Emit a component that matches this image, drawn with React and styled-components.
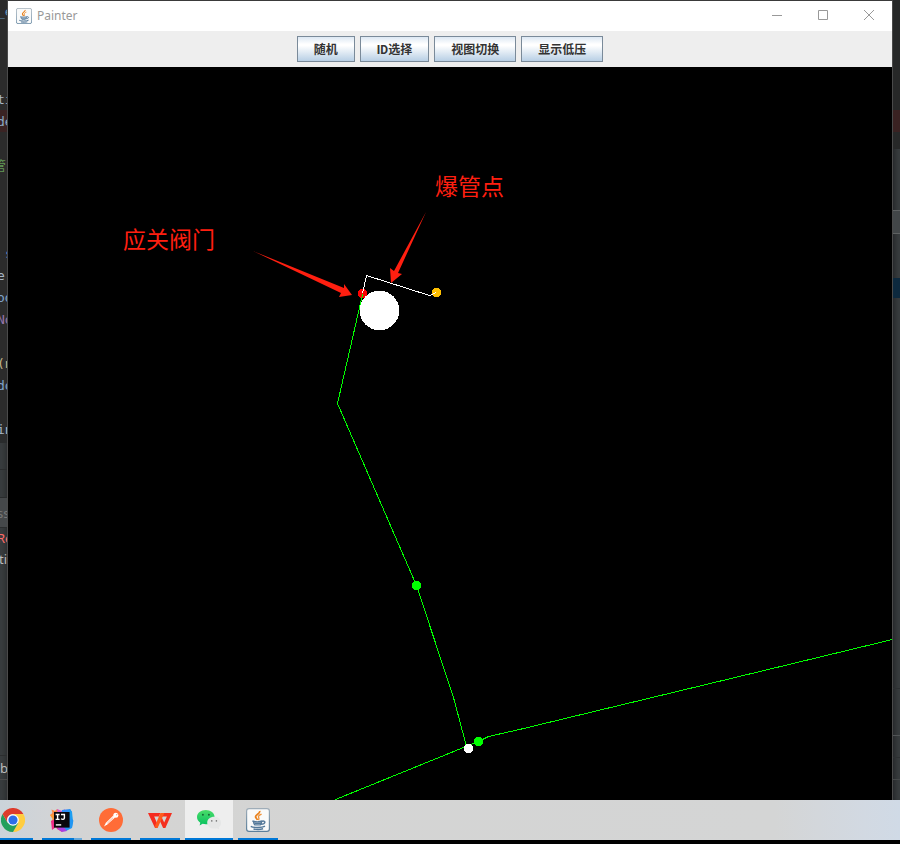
import React from 'react';
import styled, { createGlobalStyle, css } from 'styled-components';

const GlobalStyle = createGlobalStyle`
  * { box-sizing: border-box; }
  body {
    margin: 0;
    background: #000;
    font-family: "Noto Sans", "Noto Sans CJK SC", sans-serif;
  }
`;

const Screen = styled.div`
  display: flex;
  flex-direction: column;
  min-height: 100vh;
  padding-bottom: 4px;
  overflow: hidden;
  background: #000;
`;

const Desktop = styled.main`
  flex: 1;
  display: grid;
  grid-template-columns: 7px minmax(0, 1fr) 7px;
`;

/* Editor behind the window */
const EditorEdge = styled.div`
  display: flex;
  flex-direction: column;
  overflow: hidden;
  background: #393d3f;
  ${({ $side }) =>
    $side === 'left'
      ? 'box-shadow: inset -6px 0 6px -5px #26282a;'
      : 'box-shadow: inset 6px 0 6px -5px #1c1e20;'}
`;

const CodeLine = styled.div`
  flex: none;
  height: 22px;
  line-height: 24px;
  font-family: "DejaVu Sans Mono", "Noto Sans CJK SC", monospace;
  font-size: 13px;
  white-space: pre;
  text-indent: ${({ $indent = -3 }) => `${$indent}px`};
  color: ${({ $color }) => $color || '#a9b7c6'};
  background: ${({ $bg }) => $bg || '#2b2b2b'};
`;

const Band = styled.div`
  flex: ${({ $h }) => ($h ? 'none' : '1')};
  height: ${({ $h }) => ($h ? `${$h}px` : 'auto')};
  line-height: ${({ $h }) => ($h ? `${$h}px` : 'normal')};
  font-family: "Noto Sans", sans-serif;
  font-size: 13px;
  white-space: pre;
  text-indent: ${({ $indent = 0 }) => `${$indent}px`};
  color: ${({ $color }) => $color || '#bbbbbb'};
  background: ${({ $bg }) => $bg || 'transparent'};
  ${({ $line }) => $line && css`border-bottom: 1px solid ${$line};`}
`;

/* Painter window */
const Window = styled.section`
  display: flex;
  flex-direction: column;
  border: 1px solid #4a4a4a;
  border-top-color: #3a3a3a;
  border-bottom: 0;
  background: #000;
`;

const TitleBar = styled.header`
  display: flex;
  align-items: center;
  height: 30px;
  padding-left: 8px;
  gap: 5px;
  background: #fff;
`;

const Title = styled.h1`
  flex: 1;
  margin: 0;
  font-size: 12px;
  font-weight: 400;
  line-height: 16px;
  color: #999;
`;

const Controls = styled.div`
  display: flex;
`;

const ControlButton = styled.button`
  display: grid;
  place-items: center;
  width: 46px;
  height: 30px;
  padding: 0 0 2px;
  border: 0;
  background: transparent;
  color: #999;
`;

const Toolbar = styled.div`
  display: flex;
  justify-content: center;
  gap: 5px;
  padding: 5px;
  background: #eee;
`;

const ToolButton = styled.button`
  height: 26px;
  padding: 2px 16px 0;
  border: 1px solid #7a8a99;
  border-radius: 0;
  background: linear-gradient(#dde8f3 0%, #fff 30%, #fff 36%, #b8cfe5 100%);
  font-family: Roboto, "Noto Sans CJK SC", sans-serif;
  font-size: 12px;
  font-weight: 700;
  line-height: 22px;
  color: #333;
  white-space: nowrap;
`;

const Canvas = styled.div`
  flex: 1;
  display: flex;
  background: #000;
`;

const Drawing = styled.svg`
  display: block;
  width: 100%;
  height: auto;
`;

const Pipe = styled.polyline`
  fill: none;
  stroke: ${({ $color }) => $color};
  stroke-width: 1px;
  shape-rendering: crispEdges;
`;

const Node = styled.circle`
  fill: ${({ $color }) => $color};
  shape-rendering: crispEdges;
`;

const Arrow = styled.polygon`
  fill: #ff1f10;
`;

const Note = styled.text`
  fill: #ff1f10;
  font-family: "Noto Sans CJK SC", sans-serif;
  font-size: 23px;
  font-weight: 400;
`;

/* Taskbar */
const Taskbar = styled.nav`
  display: flex;
  gap: 1px;
  height: 40px;
  overflow: hidden;
  background: linear-gradient(90deg, #cbd3da 0, #d2d4d6 50px, #d4d4d3 110px, #d4d5d5 86%, #d2d9e2 96%, #d0dae6 100%);
`;

const Task = styled.button`
  flex: none;
  display: grid;
  grid-template-rows: 38px 2px;
  justify-items: center;
  align-items: center;
  width: 48px;
  height: 40px;
  padding: 0;
  border: 0;
  background: ${({ $active }) => ($active ? '#eeeeee' : 'transparent')};

  &:first-child {
    margin-left: -11px;
  }

  svg { margin-top: 2px; }
`;

const Indicator = styled.span`
  width: ${({ $active }) => ($active ? '48px' : '40px')};
  height: 2px;
  background: ${({ $stacked }) =>
    $stacked ? 'linear-gradient(90deg, #0078d7 32px, #66a9dc 32px)' : '#0078d7'};
`;

const JavaIcon = ({ size, id }) => (
  <svg width={size} height={size} viewBox="0 0 24 24" aria-hidden="true">
    <defs>
      <linearGradient id={id} x1="0" y1="0" x2="0" y2="1">
        <stop offset="0" stopColor="#9fadb8" />
        <stop offset="1" stopColor="#5b7f9b" />
      </linearGradient>
    </defs>
    <rect x="0.6" y="0.6" width="22.8" height="22.8" rx="2.4" fill="#f9fafa" stroke={`url(#${id})`} strokeWidth="1.2" />
    <path d="M13.7 3c.8 2.7-5.2 3.8-4 6.4.4.9 1.4 1.5 1.8 2.6" fill="none" stroke="#e9821e" strokeWidth="1.8" />
    <path d="M15.6 6.2c-2.5 1-3.8 2-2.9 3.4.6.9.4 1.6-.4 2.4" fill="none" stroke="#f0953c" strokeWidth="1.4" />
    <path d="M6.4 13c2.6.9 7.4.9 9.9 0M7.5 13.5c.2 1.6.6 2.6 1.3 3.4h5.4c.8-.8 1.3-1.8 1.4-3.4M16.2 13.2c3.8-.9 3.5 2.9-.9 3" fill="none" stroke="#54799a" strokeWidth="1.4" />
    <path d="M8.5 15.3h6.6M4.8 18.4c1.8 1.5 11.4 1.5 14.2-.2M7.5 21c3 .6 7 .5 9.6-.2" fill="none" stroke="#54799a" strokeWidth="1.4" />
  </svg>
);

const ChromeIcon = () => (
  <svg width="24" height="24" viewBox="0 0 24 24" aria-hidden="true">
    <path d="M12 6h10.4A12 12 0 0 1 12 24l5.2-9z" fill="#ffcd40" />
    <path d="M6.8 15 1.6 6A12 12 0 0 0 12 24l5.2-9z" fill="#249f5c" />
    <path d="M1.6 6A12 12 0 0 1 22.4 6H12a6 6 0 0 0-5.2 9z" fill="#dd3b2c" />
    <circle cx="12" cy="12" r="5.8" fill="#fff" />
    <circle cx="12" cy="12" r="4.6" fill="#2d6ee8" />
  </svg>
);

const IdeaIcon = () => (
  <svg width="24" height="24" viewBox="0 0 24 24" aria-hidden="true">
    <path d="M1.5 1.5 5 3l2-2 3 2 2 5-6 3-6-4 2.4-2z" fill="#fb8a4a" />
    <path d="M7 1l5 2 3-2-2 9-5-3z" fill="#d95bd0" />
    <path d="M12 2l8-1 2 3-3 8-8-5z" fill="#2f8cf5" />
    <path d="M20 1l2 3 1 9-1 6-5 1V5z" fill="#1c9ff2" />
    <path d="M20 9l3.4 3.5L22 20l-6 3-5-7z" fill="#2196f3" />
    <path d="M0 7l6-1v10l-5-2 1.5-3z" fill="#fb9a39" />
    <path d="M1 13l4-2 9 8-2 5-5-3-1-2-4 3z" fill="#ef2b86" />
    <path d="M7 20l6-2 4 5-5 1z" fill="#a93fe0" />
    <rect x="4" y="4" width="15.6" height="15.6" fill="#08070c" />
    <path d="M5.6 6.5h4M7.6 6.5v5M5.6 11.4h4M11 6.5h3.4v3.6c0 1.4-2 1.7-3.4.7" fill="none" stroke="#fff" strokeWidth="1.4" />
    <path d="M5.8 16.9h5.4" stroke="#fff" strokeWidth="1.4" />
  </svg>
);

const PostmanIcon = () => (
  <svg width="24" height="24" viewBox="0 0 24 24" aria-hidden="true">
    <circle cx="12" cy="12" r="12" fill="#ff6c37" />
    <path d="M14.1 7.7 16 9.6 8.6 16.2 5 18.6 6.9 14.8z" fill="#fff" />
    <path d="m8.3 15.2 5.8-5.6" stroke="#ff8a60" strokeWidth=".7" />
    <circle cx="16.8" cy="7.2" r="2.5" fill="#fff" />
    <path d="m17 7.1 1.5-.9" stroke="#ff6c37" strokeWidth=".8" />
  </svg>
);

const WpsIcon = () => (
  <svg width="24" height="24" viewBox="0 0 24 24" aria-hidden="true">
    <path d="M0 5h12.4l-1.5 3.6H6.2l2.5 5.8 1.8 2L9.2 20H7z" fill="#f52b20" />
    <path d="M14.8 5H24l-6.6 15h-2.3l-3.4-7.6 1.6-4 2.9 6.2 2.7-6h-5.5z" fill="#f4301f" />
    <path d="M12.4 5h4L9.6 20H7.5l-.6-2z" fill="#ff5a1c" />
  </svg>
);

const WechatIcon = () => (
  <svg width="24" height="24" viewBox="0 0 24 24" aria-hidden="true">
    <defs>
      <linearGradient id="wechat" x1="0" y1="0" x2="0" y2="1">
        <stop offset="0" stopColor="#4bdc69" />
        <stop offset="1" stopColor="#07c160" />
      </linearGradient>
    </defs>
    <path d="M8.8 2C3.8 2 0 5 0 9.1c0 2.4 1.3 4.4 3.3 5.7l-.7 2.6 3-1.6c1 .3 2.1.5 3.3.5 5 0 8.7-3 8.7-7.1S13.6 2 8.8 2z" fill="url(#wechat)" />
    <circle cx="5.9" cy="6.8" r="1" fill="#176b36" />
    <circle cx="11.9" cy="6.8" r="1" fill="#176b36" />
    <path d="M17.2 8.8c-4 0-7 2.5-7 5.9 0 3.3 3 5.9 7 5.9 1 0 1.9-.1 2.7-.4l2.3 1.3-.5-2.1c1.6-1.1 2.4-2.8 2.4-4.7 0-3.4-3-5.9-6.9-5.9z" fill="#e6e7e7" />
    <circle cx="14.8" cy="12.9" r=".8" fill="#777" />
    <circle cx="19.4" cy="12.9" r=".8" fill="#777" />
  </svg>
);

const code = [
  { text: '_e', color: '#6897bb' },
  {}, {}, {},
  { text: 'ti' },
  { text: 'de', bg: '#3a2323', color: '#8ba8c4' },
  {},
  { text: '管', color: '#629755', indent: -7 },
  {}, {}, {},
  { text: 's', color: '#5f93c7', indent: 5 },
  { text: 'e' },
  { text: 'od', color: '#7fa3cc' },
  { text: 'No', color: '#9876aa' },
  {},
  { text: '(n', color: '#c5b88a' },
  { text: 'do', color: '#7fa3cc' },
  {},
  { text: 'in' },
];

const tools = ['随机', 'ID选择', '视图切换', '显示低压'];

const tasks = [
  { name: 'Chrome', icon: <ChromeIcon /> },
  { name: 'IntelliJ IDEA', icon: <IdeaIcon />, stacked: true },
  { name: 'Postman', icon: <PostmanIcon /> },
  { name: 'WPS', icon: <WpsIcon /> },
  { name: 'WeChat', icon: <WechatIcon />, active: true },
  { name: 'Painter', icon: <JavaIcon size={24} id="java-task" /> },
];

const PipeNetwork = () => (
  <Drawing viewBox="8 67 884 733" preserveAspectRatio="xMinYMin meet" role="img" aria-label="Painter">
    <Node $color="#ff0000" cx="362.5" cy="293.5" r="4.8" />
    <Node $color="#ffc000" cx="436.5" cy="292.5" r="4.8" />
    <Pipe $color="#fff" points="362.5,293.5 366.5,275.5 429.5,295.5 436.5,292.5" />
    <Pipe $color="#00ff00" points="362.5,294.5 337.5,403.5 416.5,585.5 453.5,697.5 466.5,746.5" />
    <Pipe $color="#00ff00" points="335.5,799.5 468.5,745.5 478.5,741.5 488.5,736.5 519.5,729.5 892.5,639.5" />
    <Node $color="#fff" cx="379.5" cy="310.5" r="19.8" />
    <Node $color="#00ff00" cx="416.5" cy="585.5" r="4.8" />
    <Node $color="#00ff00" cx="478.5" cy="741.5" r="4.8" />
    <Node $color="#fff" cx="468.5" cy="748.5" r="4.8" />
    <Arrow points="253,251 344,288 344,284 352,295 339,297 341,293" />
    <Arrow points="426,212 398,273 402,274 391,283 390,268 394,271" />
    <Note x="435" y="195">爆管点</Note>
    <Note x="123" y="248">应关阀门</Note>
  </Drawing>
);

export default function App() {
  return (
    <>
      <GlobalStyle />
      <Screen>
        <Desktop>
          <EditorEdge $side="left">
            {code.map((line, i) => (
              <CodeLine key={i} $color={line.color} $bg={line.bg} $indent={line.indent}>
                {line.text}
              </CodeLine>
            ))}
            <Band $h={3} $bg="#292b2c" />
            <Band $h={27} $line="#2b2d2e" />
            <Band $h={28} $line="#292b2c" />
            <Band $h={30} $indent={-3} $bg="#45484a" $color="#777" $line="#2b2d2e">ss</Band>
            <Band $h={21} $indent={-3} $color="#ff6b68">Re</Band>
            <Band $h={21} $indent={-1}>tic</Band>
            <Band $line="#2b2d2e" />
            <Band $h={24} $line="#4a4a4a">b</Band>
            <Band $h={20} />
          </EditorEdge>

          <Window>
            <TitleBar>
              <JavaIcon size={16} id="java-title" />
              <Title>Painter</Title>
              <Controls>
                <ControlButton aria-label="Minimize">
                  <svg width="10" height="10" viewBox="0 0 10 10"><path d="M0 5.5h10" stroke="currentColor" /></svg>
                </ControlButton>
                <ControlButton aria-label="Maximize">
                  <svg width="10" height="10" viewBox="0 0 10 10"><path d="M.5.5h9v9h-9z" fill="none" stroke="currentColor" /></svg>
                </ControlButton>
                <ControlButton aria-label="Close">
                  <svg width="10" height="10" viewBox="0 0 10 10"><path d="m0 0 10 10M10 0 0 10" stroke="currentColor" /></svg>
                </ControlButton>
              </Controls>
            </TitleBar>
            <Toolbar>
              {tools.map((label) => (
                <ToolButton key={label}>{label}</ToolButton>
              ))}
            </Toolbar>
            <Canvas>
              <PipeNetwork />
            </Canvas>
          </Window>

          <EditorEdge $side="right">
            <Band $h={110} $bg="#272828" />
            <Band $h={22} $bg="#3a2222" />
            <Band $h={17} $bg="#272828" />
            <Band $h={62} $line="#5e6162" />
            <Band $h={23} $bg="#424648" $line="#5e6162" />
            <Band $h={44} />
            <Band $h={20} $bg="#0d293e" />
            <Band $line="#2d3032" />
            <Band $h={47} $line="#515456" />
            <Band $h={22} $line="#2d3032" />
            <Band $h={22} $line="#454849" />
            <Band $h={20} />
          </EditorEdge>
        </Desktop>

        <Taskbar>
          {tasks.map((task) => (
            <Task key={task.name} aria-label={task.name} $active={task.active}>
              {task.icon}
              <Indicator $active={task.active} $stacked={task.stacked} />
            </Task>
          ))}
        </Taskbar>
      </Screen>
    </>
  );
}
